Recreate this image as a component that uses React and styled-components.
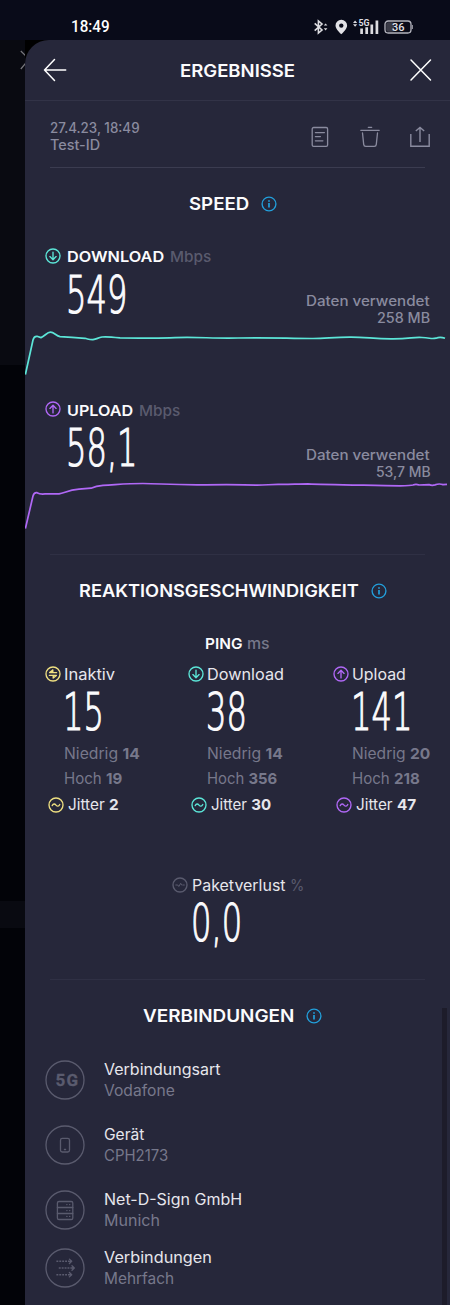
import React, { useLayoutEffect, useRef, useState } from "react";
import styled, { createGlobalStyle } from "styled-components";

const c = {
  panel: "#26273a",
  status: "#090b19",
  white: "#fbfbfd",
  soft: "#e6e6ec",
  muted: "#8a8b9f",
  grey: "#77788b",
  dim: "#5a5b6e",
  cyan: "#5ce6d8",
  purple: "#b068f6",
  yellow: "#efe081",
  blue: "#229fdb",
};

const GlobalStyle = createGlobalStyle`
  * { box-sizing: border-box; }
  body { margin: 0; background: #020308; font-family: Inter, "Liberation Sans", sans-serif; }
  svg { display: block; flex: none; }
`;

const Screen = styled.div`
  width: 450px;
  height: 1305px;
  overflow: hidden;
  display: flex;
  flex-direction: column;
`;

const StatusBar = styled.header`
  height: 40px;
  flex: none;
  background: ${c.status};
  display: flex;
  align-items: center;
  justify-content: space-between;
  padding: 13px 37px 0 71px;
`;

const Body = styled.div`
  flex: 1;
  display: flex;
  background: #000;
`;

const Backdrop = styled.aside`
  width: 25px;
  display: flex;
  flex-direction: column;
`;

const Band = styled.div`
  height: ${(p) => p.$h}px;
  background: ${(p) => p.$bg};
  display: flex;
  justify-content: flex-end;
  padding-top: 10px;
`;

const Panel = styled.main`
  position: relative;
  width: 425px;
  height: 1265px;
  background: ${c.panel};
  border-top-left-radius: 24px;
`;

const Scrollbar = styled.div`
  position: absolute;
  right: 3px;
  bottom: 0;
  width: 5px;
  height: 297px;
  background: #1d1c2a;
`;

const Header = styled.div`
  height: 61px;
  border-bottom: 1px solid #323347;
  display: flex;
  align-items: center;
  justify-content: space-between;
  padding: 0 18px;
`;

const HeaderTitle = styled.h1`
  margin: 0;
  padding-top: 1px;
  font-size: inherit;
  line-height: 20px;
`;

const Meta = styled.div`
  height: 67px;
  margin: 0 25px;
  border-bottom: 1px solid #3b3c50;
  display: flex;
  justify-content: space-between;
`;

const MetaText = styled.div`
  padding-top: 19px;
  display: flex;
  flex-direction: column;
`;

const MetaActions = styled.div`
  display: flex;
  gap: 30px;
  margin: 25px -5px 0 0;
`;

const Word = styled.span`
  display: block;
  flex: none;
  width: ${(p) => p.$w}px;
  white-space: nowrap;
  font-size: ${(p) => p.$size || 15.2}px;
  font-weight: ${(p) => p.$weight || 400};
  line-height: ${(p) => p.$lh || 20}px;
  color: ${(p) => p.$color || c.soft};
  font-family: ${(p) => p.$font || "inherit"};
`;

const Letters = styled.span`
  display: inline-block;
  vertical-align: top;
  transform-origin: left center;
`;

const Strong = styled.b`
  font-weight: 650;
`;

/* Widens and tracks its letters so that the line fills the given width. */
function Fit({ w, size, weight, lh, color, font, children }) {
  const ref = useRef(null);
  const [fit, setFit] = useState({ scale: 1, spacing: 0 });
  useLayoutEffect(() => {
    const natural = ref.current.offsetWidth;
    const count = ref.current.textContent.length;
    const scale = Math.min(1.1, Math.max(0.96, w / natural));
    setFit({ scale, spacing: (w / scale - natural) / Math.max(1, count - 1) });
  }, [w]);
  return (
    <Word $w={w} $size={size} $weight={weight} $lh={lh} $color={color} $font={font}>
      <Letters ref={ref} style={{ letterSpacing: `${fit.spacing}px`, transform: `scaleX(${fit.scale})` }}>
        {children}
      </Letters>
    </Word>
  );
}

const TitleRow = styled.h2`
  margin: 0;
  height: 72px;
  padding-right: 10px;
  display: flex;
  align-items: center;
  justify-content: center;
  gap: 12px;
`;

const SpeedResults = styled.div`
  height: 314px;
`;

const Metric = styled.section`
  height: 153px;
  & + & { margin-top: 0.5px; }
`;

const MetricTop = styled.div`
  height: 87px;
  display: flex;
  justify-content: space-between;
  padding: 0 20px 0 19.5px;
`;

const IconLabel = styled.div`
  height: ${(p) => p.$h}px;
  display: flex;
  align-items: center;
  gap: ${(p) => p.$gap}px;
  > svg { margin-top: -3px; }
`;

const Amount = styled.div`
  display: flex;
  align-items: center;
  height: ${(p) => p.$h}px;
  padding-left: ${(p) => p.$indent}px;
`;

const Digits = styled.span`
  display: inline-block;
  font-family: "DejaVu Sans", sans-serif;
  font-weight: 200;
  font-size: 51px;
  line-height: 42px;
  color: ${c.white};
  -webkit-text-stroke: 1.2px ${c.white};
  paint-order: stroke fill;
  stroke-linejoin: round;
  transform: scaleX(0.63);
  transform-origin: left center;
  white-space: nowrap;
`;

const DataUsed = styled.div`
  display: flex;
  flex-direction: column;
  align-items: flex-end;
  justify-content: flex-end;
`;

const Divider = styled.hr`
  height: 1px;
  border: 0;
  margin: 0 25px;
  background: #2f3044;
`;

const PingTitle = styled.div`
  height: 34px;
  display: flex;
  align-items: center;
  justify-content: center;
  gap: 4px;
`;

const PingGrid = styled.div`
  display: grid;
  grid-template-columns: 143px 145px 1fr;
  padding-left: 19.5px;
  height: 211px;
`;

const PingColumn = styled.div`
  display: flex;
  flex-direction: column;
`;

const Details = styled.div`
  padding: 6px 0 0 19.5px;
`;

const Detail = styled.div`
  height: 24.5px;
  display: flex;
  align-items: center;
`;

const Jitter = styled.div`
  margin-top: 1px;
  padding-left: 3.5px;
  height: 26px;
  display: flex;
  align-items: center;
  gap: 4px;
`;

const Loss = styled.section`
  height: 107px;
  padding-left: 147px;
`;

const List = styled.ul`
  list-style: none;
  margin: 0;
  padding: 7px 0 0 20px;
`;

const Item = styled.li`
  display: flex;
  align-items: center;
  gap: 19px;
  height: 42px;
  margin-bottom: ${(p) => p.$after}px;
`;

const ItemText = styled.div`
  display: flex;
  flex-direction: column;
`;

const paths = {
  down: <path d="M8 4.1v7.4M4.9 8.6 8 11.7l3.1-3.1" />,
  up: <path d="M8 11.9V4.5M4.9 7.4 8 4.3l3.1 3.1" />,
  idle: <path d="M11.6 6.6H4.6L7.8 4M4.4 9.4h7L8.2 12M7.8 4v2.6M8.2 12V9.4" />,
  wave: <path d="M4.2 8.6c1.2-2.1 2.5-2 3.8-.5s2.6 1.6 3.8-.6" />,
  loss: <path d="M3.8 8h2l1 1.5 1.9-3.2.9 1.7h.7M11.3 8h1" strokeWidth="1" />,
};

const Round = ({ kind, color }) => (
  <svg width="16" height="16" viewBox="0 0 16 16" fill="none" stroke={color} strokeWidth="1.35" strokeLinecap="round" strokeLinejoin="round">
    <circle cx="8" cy="8" r="7" />
    {paths[kind]}
  </svg>
);

const Info = () => (
  <svg width="16" height="16" viewBox="0 0 16 16" fill="none" stroke={c.blue} strokeWidth="1.35">
    <circle cx="8" cy="8" r="6.9" />
    <path d="M8 7v4.6M8 4.3v1.5" strokeWidth="1.7" />
  </svg>
);

const circled = (children) => (
  <svg width="40" height="40" viewBox="0 0 40 40" fill="none" stroke={c.dim} strokeWidth="1.3" strokeLinecap="round" strokeLinejoin="round">
    <circle cx="20" cy="20" r="19" />
    {children}
  </svg>
);

const itemIcons = {
  fiveG: circled(
    <text x="10.6" y="26.2" letterSpacing="1.1" stroke={c.dim} strokeWidth="0.3" fill={c.dim} fontFamily="Roboto, sans-serif" fontWeight="700" fontSize="17">5G</text>
  ),
  phone: circled(<><rect x="15.5" y="13.4" width="9" height="13.6" rx="1.8" /><path d="M19.4 24.5h1.2" /></>),
  server: circled(
    <>
      <rect x="12.4" y="11.5" width="15.4" height="18" rx="1.6" />
      <path d="M12.4 17.5h15.4M12.4 23.5h15.4M21.8 14.6h.2M24.6 14.6h.2M21.8 20.6h.2M24.6 20.6h.2M21.8 26.4h.2M24.6 26.4h.2" />
    </>
  ),
  arrows: circled(
    <>
      <path d="M11.4 13.3h13M13.8 20h13M11.4 26.7h13" strokeDasharray="1.9 1" strokeLinecap="butt" strokeWidth="1.5" />
      <path d="m24.4 11.1 2.3 2.2-2.3 2.2M27 17.8l2.3 2.2-2.3 2.2M24.4 24.5l2.3 2.2-2.3 2.2M24.5 13.3h2M27 20h2M24.5 26.7h2" />
    </>
  ),
};

const StatusIcons = () => (
  <svg width="100" height="16" viewBox="0 0 100 16" fill="none" stroke="#dcdce0" strokeWidth="1.6">
    <path d="M1.7 4.3 9 11l-3.6 3V2L9 5 1.7 11.7" />
    <path d="m10.8 6.6 1.8-2.2 1.8 2.2zM10.8 9.2l1.8 2.2 1.8-2.2z" fill="#dcdce0" stroke="none" />
    <path d="M28.3.8a5.7 5.7 0 0 0-5.8 5.7c0 3.9 5.8 8.8 5.8 8.8s5.8-4.9 5.8-8.8A5.7 5.7 0 0 0 28.3.8zm0 8a2.2 2.2 0 1 1 0-4.4 2.2 2.2 0 0 1 0 4.4z" fill="#e2e2e6" stroke="none" fillRule="evenodd" />
    <path d="m40 4 2.1-2.5L44.200 4zM40 5.200l2.100 2.500 2.100-2.500z" fill="#dcdce0" stroke="none" />
    <text x="45.400" y="7.200" fontSize="8.800" fontWeight="700" fontFamily="Roboto, sans-serif" fill="#dcdce0" stroke="none">5G</text>
    <path d="M48.600 9.500v5.500M53.700 8.300V15M58.800 5.500V15M63.900 1.500V15" strokeWidth="2.700" />
    <rect x="72" y="2" width="26" height="12" rx="3.200" stroke="#b5b6bf" strokeWidth="1.300" />
    <rect x="73.200" y="3.200" width="8" height="9.600" rx="2" fill="#3a3b47" stroke="none" />
    <path d="M99.300 6v4" stroke="#8b8c96" strokeWidth="1.500" />
    <text x="85.200" y="12" textAnchor="middle" fontSize="11" fontWeight="500" fontFamily="Roboto, sans-serif" fill="#e2e2e6" stroke="none">36</text>
  </svg>
);

function SpeedMetric({ kind, color, label, labelWidth, value, used, usedWidth, line }) {
  return (
    <Metric>
      <MetricTop>
        <div>
          <IconLabel $h={34} $gap={6}>
            <Round kind={kind} color={color} />
            <Fit w={labelWidth} size={15.2} weight={600} color={c.white}>{label}</Fit>
            <Fit w={41} size={15} weight={500} color={c.dim}>Mbps</Fit>
          </IconLabel>
          <Amount $h={43} $indent={21.5}><Digits>{value}</Digits></Amount>
        </div>
        <DataUsed>
          <Fit w={124} size={13.8} weight={500} lh={17} color={c.muted}>Daten verwendet</Fit>
          <Fit w={usedWidth} size={13.8} weight={500} lh={17} color={c.muted}>{used}</Fit>
        </DataUsed>
      </MetricTop>
      <svg width="425" height="66" viewBox="0 0 425 66" fill="none" stroke={color} strokeWidth="1.7" strokeLinejoin="round">
        <path d={line} />
      </svg>
    </Metric>
  );
}

function Ping({ kind, color, label, labelWidth, value, low, lowWidth, high, highWidth, jitter, jitterWidth }) {
  return (
    <PingColumn>
      <IconLabel $h={28} $gap={3.5}>
        <Round kind={kind} color={color} />
        <Fit w={labelWidth}>{label}</Fit>
      </IconLabel>
      <Amount $h={47} $indent={18.5}><Digits>{value}</Digits></Amount>
      <Details>
        <Detail><Fit w={lowWidth} color={c.grey}>Niedrig <Strong>{low}</Strong></Fit></Detail>
        <Detail><Fit w={highWidth} color={c.grey}>Hoch <Strong>{high}</Strong></Fit></Detail>
      </Details>
      <Jitter>
        <Round kind="wave" color={color} />
        <Fit w={jitterWidth}>Jitter <Strong>{jitter}</Strong></Fit>
      </Jitter>
    </PingColumn>
  );
}

function SectionTitle({ w, children }) {
  return (
    <TitleRow>
      <Fit w={w} size={17.4} weight={600} color={c.white}>{children}</Fit>
      <Info />
    </TitleRow>
  );
}

const connections = [
  { icon: "fiveG", title: "Verbindungsart", tw: 117, sub: "Vodafone", sw: 71, after: 23 },
  { icon: "phone", title: "Gerät", tw: 40, sub: "CPH2173", sw: 64, after: 23 },
  { icon: "server", title: "Net-D-Sign GmbH", tw: 138, sub: "Munich", sw: 56, after: 16 },
  { icon: "arrows", title: "Verbindungen", tw: 108, sub: "Mehrfach", sw: 70, after: 0 },
];

export default function App() {
  return (
    <Screen>
      <GlobalStyle />
      <StatusBar>
        <Fit w={38.5} size={15.8} weight={500} font="Roboto, sans-serif" color="#fff">18:49</Fit>
        <StatusIcons />
      </StatusBar>
      <Body>
        <Backdrop>
          <Band $h={325} $bg="#090a11">
            <svg width="5" height="20" viewBox="0 0 5 20" fill="none" stroke="#77777c" strokeWidth="1.2">
              <path d="m.8 1 5 5M.8 19l5-6" />
            </svg>
          </Band>
          <Band $h={536} $bg="#020308" />
          <Band $h={27} $bg="#090a11" />
          <Band $h={377} $bg="#020308" />
        </Backdrop>
        <Panel>
          <Header>
            <svg width="24" height="24" viewBox="0 0 24 24" fill="none" stroke="#fff" strokeWidth="1.5" strokeLinecap="round" strokeLinejoin="round">
              <path d="M22.700 12H1.500M11.500 1.500 1.500 12l10 10.500" />
            </svg>
            <HeaderTitle>
              <Fit w={115} size={17.4} weight={600} color={c.white}>ERGEBNISSE</Fit>
            </HeaderTitle>
            <svg width="24" height="24" viewBox="0 0 24 24" fill="none" stroke="#fff" strokeWidth="1.5" strokeLinecap="round">
              <path d="m3 2 19.500 20M22.500 2 3 22" />
            </svg>
          </Header>
          <Meta>
            <MetaText>
              <Fit w={90} size={13.8} weight={550} lh={17} color={c.muted}>27.4.23, 18:49</Fit>
              <Fit w={50} size={13.8} weight={550} lh={17} color={c.muted}>Test-ID</Fit>
            </MetaText>
            <MetaActions>
              <svg width="20" height="22" viewBox="0 0 20 22" fill="none" stroke={c.muted} strokeWidth="1.3" strokeLinecap="round">
                <rect x="2.2" y="1.500" width="15.4" height="18.8" rx="1.4" />
                <path d="M5.4 6.600h9M5.4 10.600h5M5.4 14.800h7.500" />
              </svg>
              <svg width="20" height="22" viewBox="0 0 20 22" fill="none" stroke={c.muted} strokeWidth="1.3" strokeLinecap="round" strokeLinejoin="round">
                <path d="M.8 4.300h18.400M8.300 1.300h3.400M2.500 7l1.200 11.400q.2 2 2 2h8.600q1.800 0 2-2L17.500 7" />
              </svg>
              <svg width="20" height="22" viewBox="0 0 20 22" fill="none" stroke={c.muted} strokeWidth="1.4">
                <path d="M.8 8v12.300h18.400V8M10 16V1.600M5.800 5 10 1.500 14.200 5" />
              </svg>
            </MetaActions>
          </Meta>

          <SectionTitle w={60}>SPEED</SectionTitle>
          <SpeedResults>
            <SpeedMetric kind="down" color={c.cyan} label="DOWNLOAD" labelWidth={97.5} value="549" used="258 MB" usedWidth={53}
              line="M.4 47.5 8 13Q9 9 12 9.300L16 10.600C20 9 22 5.200 25.500 5.200S31 8.800 35 9.700L47 10.300 60 11.300C64 12.300 65 12.900 68 12.700C72 12 73 10.700 77 10S88 10.100 95 10.900C120 11 130 11.700 150 10.700S190 11.700 213 11C245 10.200 265 11.600 288 11.500C302 11.300 310 10 326 10.100S350 12 368 11.800S388 10 397 10.500S406 12.200 411 11.200Q415 9.300 420 11.300" />
            <SpeedMetric kind="up" color={c.purple} label="UPLOAD" labelWidth={66} value="58,1" used="53,7 MB" usedWidth={54.5}
              line="M.4 47.500 8 15Q9 11.300 12 11.700Q15 13.500 20 12.900L34 12.900C40 11.800 43 9.300 54 8.200L66 7.200Q71 4.700 78 4.300C92 3.600 102 2.500 118 2.500S142 3.800 172 3.800C200 3.400 217 3.200 232 4.200C242 4.200 246 3.200 255 3.400S273 2.800 283 2.800C300 3.700 345 4.100 375 4.800Q386 4.700 388 4Q391 2.600 394 4L404 3.600Q407 4.900 410 3.900Q414 2.300 418 3.600L422 3.300" />
          </SpeedResults>
          <Divider />
          <SectionTitle w={280}>REAKTIONSGESCHWINDIGKEIT</SectionTitle>
          <PingTitle>
            <Fit w={37.5} size={15.2} weight={600} color={c.white}>PING</Fit>
            <Fit w={23} size={15.2} weight={500} color={c.grey}>ms</Fit>
          </PingTitle>
          <PingGrid>
            <Ping kind="idle" color={c.yellow} label="Inaktiv" labelWidth={51} value="15" low="14" lowWidth={75.5} high="19" highWidth={58.5} jitter="2" jitterWidth={50.5} />
            <Ping kind="down" color={c.cyan} label="Download" labelWidth={77} value="38" low="14" lowWidth={75.5} high="356" highWidth={70.5} jitter="30" jitterWidth={60.5} />
            <Ping kind="up" color={c.purple} label="Upload" labelWidth={53.5} value="141" low="20" lowWidth={78} high="218" highWidth={67.5} jitter="47" jitterWidth={60.5} />
          </PingGrid>
          <Loss>
            <IconLabel $h={28} $gap={4}>
              <Round kind="loss" color={c.dim} />
              <Fit w={93.5}>Paketverlust</Fit>
              <Fit w={13} color={c.dim}>%</Fit>
            </IconLabel>
            <Amount $h={47} $indent={18.5}><Digits>0,0</Digits></Amount>
          </Loss>
          <Divider />
          <SectionTitle w={151}>VERBINDUNGEN</SectionTitle>
          <List>
            {connections.map((x) => (
              <Item key={x.title} $after={x.after}>
                {itemIcons[x.icon]}
                <ItemText>
                  <Fit w={x.tw} lh={21}>{x.title}</Fit>
                  <Fit w={x.sw} lh={21} color={c.grey}>{x.sub}</Fit>
                </ItemText>
              </Item>
            ))}
          </List>
          <Scrollbar />
        </Panel>
      </Body>
    </Screen>
  );
}
